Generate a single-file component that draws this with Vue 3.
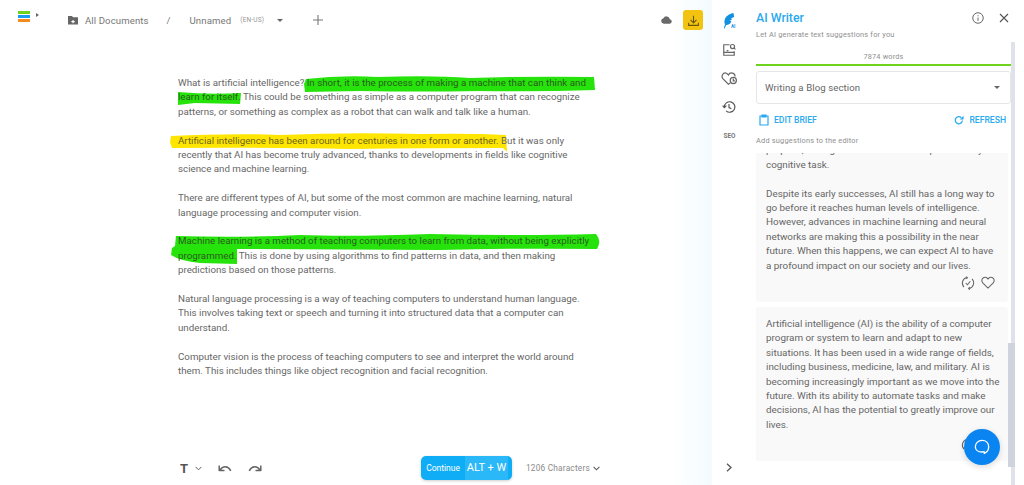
<template>
  <div class="app">
    <section class="main">
      <header class="topbar">
        <div class="logo"><i class="g"></i><i class="b"></i><i class="o"></i></div>
        <span class="caret-right"></span>
        <svg class="folder" width="12" height="12" viewBox="0 0 24 24"><path fill="#666" d="M2 4h8l2 2.500h10V21H2z"/><path fill="#fff" d="M11 12h2.200v2.200h2.200v2.200h-2.200v2.200H11v-2.200H8.800v-2.200H11z"/></svg>
        <span class="crumb">All Documents</span>
        <span class="slash">/</span>
        <span class="crumb unnamed">Unnamed</span>
        <span class="lang">(EN-US)</span>
        <span class="caret-down"></span>
        <svg class="plus" width="10" height="10" viewBox="0 0 10 10"><path d="M5 0v10M0 5h10" stroke="#777" stroke-width="1.100"/></svg>
        <svg class="cloud" width="11" height="8" viewBox="0 0 24 17"><path fill="#6a6a6a" d="M19.300 6.600A7.500 7.500 0 0 0 5.300 4.600 6 6 0 0 0 6 16.500h13a5 5 0 0 0 .3-9.900z"/></svg>
        <button class="download">
          <svg width="13" height="13" viewBox="0 0 24 24" fill="none" stroke="#6b5610" stroke-width="2"><path d="M12 3v13M6.500 11l5.500 5.500 5.500-5.500M3 16v5h18v-5"/></svg>
        </button>
      </header>

      <div class="doc">
        <svg class="marks" width="712" height="400" viewBox="0 40 712 400">
          <path fill="#26e30c" d="M306 79 Q340 75 378 77 Q430 75 470 78 Q530 76 594 77 L595 90 Q540 92 480 91 Q420 92 360 91 L305 92 L304 84z"/>
          <path fill="#26e30c" d="M178 92 Q210 95 241 93 L240 104 L195 103 L178 105z"/>
          <path fill="#ffe600" d="M171 136 Q230 133 280 135 Q350 132 420 134 Q470 133 506 135 L507 152 L503 148 Q430 148 350 149 Q250 147 172 148 L170 142z"/>
          <path fill="#26e30c" d="M176 236 Q240 238 300 235 Q350 237 430 234 Q520 236 596 234 Q602 241 597 249 Q520 248 440 250 L237 249 L237 264 L200 263 Q180 261 171 255 L172 248 L175 246z"/>
        </svg>
        <p>What is artificial intelligence? <mark>In short, it is the process of making a machine that can think and<br>learn for itself.</mark> This could be something as simple as a computer program that can recognize<br>patterns, or something as complex as a robot that can walk and talk like a human.</p>
        <p><mark class="y">Artificial intelligence has been around for centuries in one form or another.</mark> But it was only<br>recently that AI has become truly advanced, thanks to developments in fields like cognitive<br>science and machine learning.</p>
        <p>There are different types of AI, but some of the most common are machine learning, natural<br>language processing and computer vision.</p>
        <p><mark>Machine learning is a method of teaching computers to learn from data, without being explicitly<br>programmed.</mark> This is done by using algorithms to find patterns in data, and then making<br>predictions based on those patterns.</p>
        <p>Natural language processing is a way of teaching computers to understand human language.<br>This involves taking text or speech and turning it into structured data that a computer can<br>understand.</p>
        <p>Computer vision is the process of teaching computers to see and interpret the world around<br>them. This includes things like object recognition and facial recognition.</p>
      </div>

      <footer class="toolbar">
        <span class="t-btn">T</span>
        <svg class="chev small" width="7" height="5" viewBox="0 0 8 5"><path d="M.7.700 4 4 7.300.7" fill="none" stroke="#555" stroke-width="1.100"/></svg>
        <svg class="undo" width="14" height="8" viewBox="0 0 14 8"><path d="M1.200 7V1.500M1.200 6.500H6.500M2 6C5 1.500 10 1.800 12.800 6.800" fill="none" stroke="#666" stroke-width="1.500"/></svg>
        <svg class="redo" width="14" height="8" viewBox="0 0 14 8"><path d="M12.800 7V1.500M12.800 6.500H7.500M12 6C9 1.500 4 1.800 1.200 6.800" fill="none" stroke="#666" stroke-width="1.500"/></svg>
        <button class="continue"><span class="c-label">Continue</span><span class="c-key">ALT + W</span></button>
        <span class="count">1206 Characters</span>
        <svg width="7" height="5" viewBox="0 0 8 5"><path d="M.7.700 4 4 7.300.7" fill="none" stroke="#555" stroke-width="1.200"/></svg>
      </footer>
    </section>

    <nav class="rail">
      <svg class="feather" width="12" height="16" viewBox="0 0 15 20"><path fill="#1490e0" d="M13 0C8 1 3 4 2 9c-.6 2.500 0 4 .6 5L1 19l1 .5 2-4.500c3 0 6-2 6.500-5L8 10l3.200-2-1-1.500L14 5z"/></svg>
      <span class="ai-tag">AI</span>
      <svg class="r-icon" width="14" height="14" viewBox="0 0 24 24" fill="none" stroke="#666" stroke-width="2"><path d="M13 3H3v18h18v-7"/><path d="M3 16h18M8 13h3"/><circle cx="18" cy="6" r="3.500"/><path d="M20.500 8.500 23 11"/></svg>
      <svg class="r-icon" width="16" height="14" viewBox="0 0 26 22" fill="none" stroke="#666" stroke-width="2"><path d="M15 19 12 21 3 12C0 8 3 2 8 3c2 .3 3 1.500 4 3 1.500-3 5-4 8-2.500 2 1 3 3 2.800 5"/><circle cx="20" cy="15" r="5"/><path d="M20 12v3.500h2.500"/></svg>
      <svg class="r-icon" width="14" height="14" viewBox="0 0 24 24" fill="none" stroke="#555" stroke-width="2"><path d="M4 12a9 9 0 1 1 3 6.700"/><path d="M1 9.500 4 13l3.500-3.500"/><path d="M12 7v6l4 2"/></svg>
      <span class="seo">SEO</span>
      <svg class="collapse" width="6" height="9" viewBox="0 0 6 9"><path d="M1 .8 5 4.500 1 8.200" fill="none" stroke="#555" stroke-width="1.300"/></svg>
    </nav>

    <aside class="panel">
      <div class="panel-head">
        <div>
          <h1>AI Writer</h1>
          <p class="sub">Let AI generate text suggestions for you</p>
        </div>
        <svg width="12" height="12" viewBox="0 0 24 24" fill="none" stroke="#555" stroke-width="1.800"><circle cx="12" cy="12" r="10.500"/><path d="M12 11v6.500M12 6.500v2"/></svg>
        <svg class="close" width="10" height="10" viewBox="0 0 10 10"><path d="M1 1l8 8M9 1 1 9" stroke="#555" stroke-width="1.100"/></svg>
      </div>
      <div class="panel-body">
        <div class="panel-col">
          <div class="words">7874 words</div>
          <div class="bar"></div>
          <div class="select"><span>Writing a Blog section</span><span class="caret-down"></span></div>
          <div class="actions">
            <span class="act">
              <svg width="10" height="12" viewBox="0 0 20 24" fill="none" stroke="#29a9ee" stroke-width="2.400"><path d="M6 4H2v18h16V4h-4"/><path fill="#29a9ee" d="M6 2h8v4H6z"/></svg>
              EDIT BRIEF
            </span>
            <span class="act">
              <svg width="10" height="10" viewBox="0 0 24 24" fill="none" stroke="#29a9ee" stroke-width="3"><path d="M20 13a8.500 8.500 0 1 1-2.500-6.500"/><path fill="#29a9ee" stroke="none" d="M23 2v9h-9z"/></svg>
              REFRESH
            </span>
          </div>
          <div class="hint">Add suggestions to the editor</div>
          <div class="cards">
            <article class="card first">
              <p>purpose, intelligent machine that can perform any<br>cognitive task.<br><br>Despite its early successes, AI still has a long way to<br>go before it reaches human levels of intelligence.<br>However, advances in machine learning and neural<br>networks are making this a possibility in the near<br>future. When this happens, we can expect AI to have<br>a profound impact on our society and our lives.</p>
              <div class="card-icons">
                <svg width="14" height="14" viewBox="0 0 24 24" fill="none" stroke="#666" stroke-width="1.800"><path d="M5 19A10 10 0 0 1 10 2.500M19 5a10 10 0 0 1-5 16.500"/><path d="M8 12l3 3 5-6"/><path d="M9 1l2 2-2 2M15 19l-2 2.500 2 2"/></svg>
                <svg width="14" height="13" viewBox="0 0 24 22" fill="none" stroke="#666" stroke-width="1.800"><path d="M12 20.500 3 11.500C-.5 7.500 2.500 1.500 7.500 2 9.500 2.200 11 3.500 12 5c1-1.500 2.500-2.800 4.500-3 5-.5 8 5.500 4.500 9.500z"/></svg>
              </div>
            </article>
            <article class="card second">
              <p>Artificial intelligence (AI) is the ability of a computer<br>program or system to learn and adapt to new<br>situations. It has been used in a wide range of fields,<br>including business, medicine, law, and military. AI is<br>becoming increasingly important as we move into the<br>future. With its ability to automate tasks and make<br>decisions, AI has the potential to greatly improve our<br>lives.</p>
              <div class="card-icons">
                <svg width="14" height="14" viewBox="0 0 24 24" fill="none" stroke="#666" stroke-width="1.800"><path d="M5 19A10 10 0 0 1 10 2.500M19 5a10 10 0 0 1-5 16.500"/></svg>
              </div>
            </article>
          </div>
        </div>
        <div class="scroll"><div class="thumb"></div></div>
      </div>
    </aside>

    <button class="chat">
      <svg width="16" height="16" viewBox="0 0 24 24" fill="none" stroke="#fff" stroke-width="2"><path d="M12 2c6 0 10 4 10 9.500 0 5.500-3 8.500-6.500 10l-.5-2.500c-1 .4-2 .5-3 .5-6 0-10-3.500-10-8S6 2 12 2z"/></svg>
    </button>
  </div>
</template>

<script setup>
</script>

<style>
html, body { margin: 0; background: #fff; overflow: hidden; }
</style>

<style scoped>
.app {
  position: relative;
  display: flex;
  width: 1024px;
  height: 485px;
  overflow: hidden;
  background: #fff;
  font-family: Roboto, "Liberation Sans", sans-serif;
  color: #666;
}
.main {
  width: 712px;
  flex: none;
  display: flex;
  flex-direction: column;
  background: linear-gradient(to right, #fff 670px, #f3fbff 712px);
}
.topbar {
  height: 40px;
  flex: none;
  display: flex;
  align-items: center;
  padding-left: 18px;
  font-size: 9.600px;
  color: #777;
}
.logo { width: 12px; display: flex; flex-direction: column; gap: 1px; margin-top: -8px; }
.logo i { height: 3px; display: block; }
.logo .g { background: #6fd21c; }
.logo .b { background: #1e9bf0; }
.logo .o { background: #f58a1f; }
.caret-right {
  width: 0; height: 0; margin: -10px 0 0 6px;
  border-left: 3px solid #666;
  border-top: 2.500px solid transparent;
  border-bottom: 2.500px solid transparent;
}
.folder { margin-left: 28px; }
.crumb { margin-left: 6px; letter-spacing: .1px; }
.slash { margin: 0 0 0 18px; }
.crumb.unnamed { margin-left: 19px; }
.lang { margin-left: 9px; font-size: 6.500px; color: #999; letter-spacing: .2px; }
.caret-down {
  width: 0; height: 0; display: inline-block;
  border-top: 3px solid #666;
  border-left: 3px solid transparent;
  border-right: 3px solid transparent;
}
.topbar .caret-down { margin-left: 13px; }
.plus { margin-left: 30px; }
.cloud { margin-left: auto; }
.download {
  margin: 0 9px 0 11px;
  width: 20px; height: 20px; padding: 0;
  border: none; border-radius: 3px;
  background: #f2c311;
  display: flex; align-items: center; justify-content: center;
}
.doc {
  position: relative;
  flex: 1;
  padding: 36px 0 0 178px;
  font-size: 9.750px;
  line-height: 14.400px;
  white-space: nowrap;
}
.doc p { position: relative; margin: 0 0 14.400px; }
.doc mark { background: none; color: #2a5c1c; }
.doc mark.y { color: #6b6420; }
.marks { position: absolute; left: 0; top: 0; }
.toolbar {
  height: 40px;
  flex: none;
  display: flex;
  align-items: center;
  padding: 6px 0 0 180px;
  box-sizing: border-box;
}
.t-btn { font: 700 13px Roboto, sans-serif; color: #555; width: 9px; }
.chev.small { margin-left: 6px; }
.undo { margin-left: 16px; }
.redo { margin-left: 16px; }
.continue {
  margin-left: 159px;
  width: 91px; height: 24px; padding: 0 4px 0 0;
  border: none; border-radius: 5px;
  background: #0fadf6;
  color: #fff;
  display: flex; align-items: stretch; justify-content: flex-end;
  font-family: inherit;
  box-shadow: 0 1px 3px rgba(0,0,0,.2);
}
.c-label { font-size: 8.500px; line-height: 24px; margin-right: 5px; }
.c-key { background: #2bb8f8; font-size: 11px; line-height: 24px; padding: 0 1px; width: 41px; text-align: center; }
.count { margin: 0 3px 0 14px; font-size: 8.300px; color: #8a8a8a; letter-spacing: .2px; }
.rail {
  position: relative;
  width: 36px;
  flex: none;
  display: flex;
  flex-direction: column;
  align-items: center;
  padding: 13px 2px 0 0;
  box-sizing: border-box;
}
.ai-tag { position: absolute; left: 19px; top: 24px; font-size: 4.500px; font-weight: 700; color: #1490e0; }
.r-icon { margin-top: 14px; }
.r-icon:nth-of-type(4) { margin-top: 15px; }
.seo { margin-top: 17px; font-size: 8px; font-weight: 700; color: #777; transform: scaleX(.8); }
.collapse { margin-top: auto; margin-bottom: 13px; }
.panel {
  flex: 1;
  padding: 0 0 0 8px;
  display: flex;
  flex-direction: column;
  min-width: 0;
}
.panel-head {
  height: 42px;
  flex: none;
  display: flex;
  align-items: flex-start;
  padding-right: 15px;
  box-sizing: border-box;
}
.panel-head > div { flex: 1; padding-top: 10px; }
.panel-head > svg { margin-top: 12px; }
.panel-head .close { margin: 13px 0 0 15px; }
h1 { margin: 0; font-size: 12.300px; line-height: 16px; font-weight: 500; color: #29a9ee; }
.sub { margin: 3px 0 0; font-size: 7.400px; line-height: 12px; letter-spacing: .2px; color: #8f8f8f; }
.panel-body { flex: 1; display: flex; min-height: 0; }
.panel-col { width: 255px; flex: none; display: flex; flex-direction: column; min-height: 0; }
.words { text-align: center; font-size: 7.300px; line-height: 12px; margin-top: 9px; color: #8f8f8f; letter-spacing: .2px; }
.bar { height: 2px; background: #6fd21c; margin-top: 1px; }
.select {
  margin-top: 5px;
  height: 33px;
  flex: none;
  border: 1px solid #e6e6e6;
  border-radius: 3px;
  padding: 0 10px 0 8px;
  display: flex; align-items: center; justify-content: space-between;
  font-size: 9.600px;
  box-sizing: border-box;
  letter-spacing: .1px;
}
.actions {
  display: flex; justify-content: space-between;
  padding: 0 5px 0 3px;
  margin-top: 9px;
  height: 14px;
  flex: none;
  align-items: center;
  font-size: 8.600px; font-weight: 500; color: #29a9ee;
}
.act { display: flex; align-items: center; gap: 5px; }
.hint { margin-top: 8px; font-size: 7.400px; line-height: 12px; color: #8f8f8f; letter-spacing: .2px; }
.cards {
  flex: 1;
  min-height: 0;
  margin: 6px 3px 24px 0;
  overflow: hidden;
  display: flex;
  flex-direction: column;
  justify-content: flex-end;
  gap: 5px;
}
.card { flex: none; background: #f9f9f9; border-radius: 3px; padding: 10px 10px 0; font-size: 9.850px; line-height: 14.400px; white-space: nowrap; }
.card p { margin: 0; }
.card-icons { display: flex; justify-content: flex-end; gap: 6px; margin-top: 3px; height: 26px; align-items: flex-start; margin-right: -10px; padding-right: 13px; }
.second { height: 154px; box-sizing: border-box; }
.second .card-icons { margin-top: 6px; padding-right: 33px; }
.scroll { width: 4px; background: #dfe2e8; height: 100%; flex: none; }
.thumb { width: 7px; height: 124px; margin: 301px 0 0 -3px; background: #cfd3dd; position: relative; }
.chat {
  position: absolute;
  left: 964px; top: 429px;
  width: 36px; height: 36px; padding: 0;
  border: none; border-radius: 50%;
  background: #0a84f0;
  display: flex; align-items: center; justify-content: center;
  box-shadow: 0 2px 6px rgba(0,0,0,.15);
}
</style>
